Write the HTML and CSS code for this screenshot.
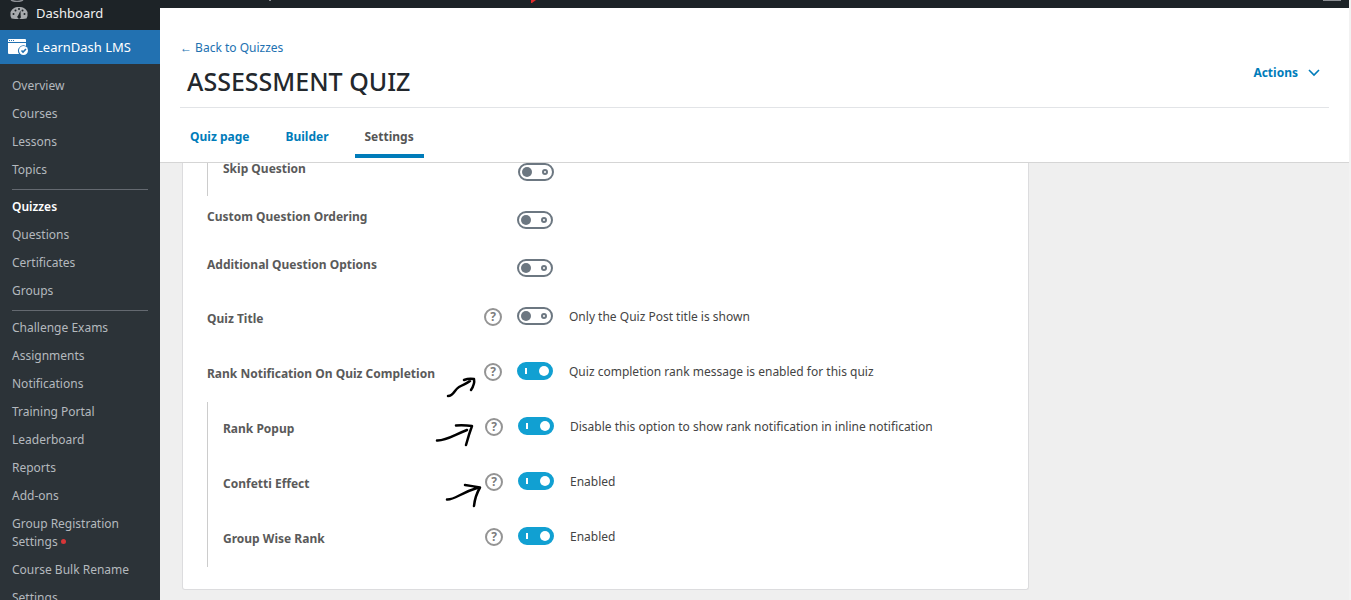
FILE: index.html
```html
<!DOCTYPE html>
<html lang="en">
<head>
    <meta charset="UTF-8">
    <meta name="viewport" content="width=device-width, initial-scale=1.0">
    <title>Assessment Quiz - Settings</title>
    <link rel="stylesheet" href="styles.css">
</head>
<body>
    <aside class="sidebar">
        <svg class="site-icon" width="14" height="2" viewBox="0 0 14 2"><path d="M1 0Q7 3 13 0" fill="none" stroke="#8c8f94" stroke-width="1.5"/></svg>
        <a class="menu-top" href="#">
            <svg width="18" height="14" viewBox="0 0 18 14">
                <path d="M1.500 12.500Q0 10 .5 6.500C1.500 3 4.500 1 9 1s7.500 2 8.500 5.500q.5 3.500-1 6-7.500 1-15 0z" fill="#a7aaad"/>
                <g fill="#1d2327"><circle cx="3.500" cy="8" r="1"/><circle cx="5.500" cy="4.500" r="1"/><circle cx="9" cy="3" r="1"/><circle cx="12.500" cy="4.500" r="1"/><circle cx="14.500" cy="8" r="1"/><path d="m10.500 4.500.2 5.500a1.800 1.800 0 1 1-2.600-.6z"/></g>
            </svg>
            Dashboard
        </a>
        <a class="menu-top current" href="#">
            <svg width="20" height="16" viewBox="0 0 20 16">
                <path d="M1 0h16a1 1 0 0 1 1 1v2H0V1a1 1 0 0 1 1-1zM0 4h18v3a5.500 5.500 0 0 0-7 8H1a1 1 0 0 1-1-1z" fill="#fff"/>
                <path d="M1 1.500h1M3 1.500h1M5 1.500h1" stroke="#2271b1"/>
                <circle cx="15.500" cy="11.500" r="4.500" fill="#fff"/>
                <path d="m13.500 11.500 1.500 1.500 3-3" fill="none" stroke="#2271b1" stroke-width="1.600"/>
            </svg>
            LearnDash LMS
        </a>
        <ul class="submenu">
            <li><a href="#">Overview</a></li>
            <li><a href="#">Courses</a></li>
            <li><a href="#">Lessons</a></li>
            <li><a href="#">Topics</a></li>
            <li class="separator"></li>
            <li><a class="active" href="#">Quizzes</a></li>
            <li><a href="#">Questions</a></li>
            <li><a href="#">Certificates</a></li>
            <li><a href="#">Groups</a></li>
            <li class="separator"></li>
            <li><a href="#">Challenge Exams</a></li>
            <li><a href="#">Assignments</a></li>
            <li><a href="#">Notifications</a></li>
            <li><a href="#">Training Portal</a></li>
            <li><a href="#">Leaderboard</a></li>
            <li><a href="#">Reports</a></li>
            <li><a href="#">Add-ons</a></li>
            <li><a href="#">Group Registration Settings <span class="dot"></span></a></li>
            <li><a href="#">Course Bulk Rename</a></li>
            <li><a href="#">Settings</a></li>
        </ul>
    </aside>

    <div class="page">
        <div class="admin-bar">
            <span class="bar-tick"></span>
            <svg class="bar-flag" width="5" height="3" viewBox="0 0 5 3"><path d="M0 0h5L1 3H0z" fill="#e02b2b"/></svg>
            <span class="bar-avatar"></span>
        </div>

        <header class="page-header">
            <a class="back" href="#">← Back to Quizzes</a>
            <div class="title-row">
                <h1>ASSESSMENT QUIZ</h1>
                <button class="actions" type="button">
                    Actions
                    <svg width="12" height="8" viewBox="0 0 12 8"><path d="m1 1 5 5 5-5" fill="none" stroke="currentColor" stroke-width="1.600"/></svg>
                </button>
            </div>
            <nav class="tabs">
                <a href="#">Quiz page</a>
                <a href="#">Builder</a>
                <a class="selected" href="#">Settings</a>
            </nav>
        </header>

        <main>
            <form class="card">
                <div class="sub-settings">
                    <div class="row short">
                        <label class="name" for="skip">Skip Question</label>
                        <input class="toggle" type="checkbox" id="skip">
                    </div>
                </div>
                <div class="row short">
                    <label class="name" for="ordering">Custom Question Ordering</label>
                    <input class="toggle" type="checkbox" id="ordering">
                </div>
                <div class="row short">
                    <label class="name" for="additional">Additional Question Options</label>
                    <input class="toggle" type="checkbox" id="additional">
                </div>
                <div class="row">
                    <label class="name" for="quiz-title">Quiz Title</label>
                    <button class="help" type="button">?</button>
                    <input class="toggle" type="checkbox" id="quiz-title">
                    <label class="desc" for="quiz-title">Only the Quiz Post title is shown</label>
                </div>
                <div class="row">
                    <label class="name" for="rank">Rank Notification On Quiz Completion</label>
                    <button class="help" type="button">?</button>
                    <input class="toggle" type="checkbox" id="rank" checked>
                    <label class="desc" for="rank">Quiz completion rank message is enabled for this quiz</label>
                </div>
                <div class="sub-settings">
                    <div class="row">
                        <label class="name" for="popup">Rank Popup</label>
                        <button class="help" type="button">?</button>
                        <input class="toggle" type="checkbox" id="popup" checked>
                        <label class="desc" for="popup">Disable this option to show rank notification in inline notification</label>
                    </div>
                    <div class="row">
                        <label class="name" for="confetti">Confetti Effect</label>
                        <button class="help" type="button">?</button>
                        <input class="toggle" type="checkbox" id="confetti" checked>
                        <label class="desc" for="confetti">Enabled</label>
                    </div>
                    <div class="row">
                        <label class="name" for="group-rank">Group Wise Rank</label>
                        <button class="help" type="button">?</button>
                        <input class="toggle" type="checkbox" id="group-rank" checked>
                        <label class="desc" for="group-rank">Enabled</label>
                    </div>
                </div>

                <!-- hand drawn arrows pointing at the help buttons -->
                <svg class="arrows" width="60" height="140" viewBox="430 370 60 140">
                    <path d="M448 396C454 396 454 390 459 387S466 384 470 381M464 380Q469 378 474 379 475 384 471 390"/>
                    <path d="M437 440.500C446 441 454 435 467 430M456 425.500Q464 425 472 426 469 434 466 445"/>
                    <path d="M447 499.500C455 500 460 493 477 488M465 485Q472 486 480 487.500 475 496 474 506"/>
                </svg>
            </form>
        </main>
    </div>
</body>
</html>
```
FILE: styles.css
```css
/* General Styles */
*,
*::before,
*::after {
    box-sizing: border-box;
}

body {
    margin: 0;
    padding-right: 2px;
    display: flex;
    height: 100vh;
    overflow: hidden;
    background-color: #f2f2f2;
    color: #3c434a;
    font-family: "Segoe UI", "Noto Sans", sans-serif;
    font-size: 12px;
    line-height: 18px;
}

a {
    color: #2271b1;
    text-decoration: none;
}

button {
    font-family: inherit;
    cursor: pointer;
}

/* Sidebar Styles */
.sidebar {
    flex: 0 0 160px;
    background-color: #1d2327;
    display: flex;
    flex-direction: column;
    overflow: hidden;
}

.site-icon {
    flex-shrink: 0;
    margin-left: 10px;
}

.menu-top {
    display: flex;
    align-items: center;
    flex-shrink: 0;
    gap: 8px;
    height: 28px;
    padding: 0 8px 6px 10px;
    font-size: 13px;
    color: #f0f0f1;
}

.menu-top.current {
    height: 34px;
    padding: 0 8px;
    background-color: #2271b1;
    color: #fff;
}

.submenu {
    flex: 1 0 auto;
    margin: 0;
    padding: 8px 0;
    list-style: none;
    background-color: #2c3338;
}

.submenu a {
    display: block;
    padding: 5px 12px;
    color: #b4b9be;
}

.submenu a.active {
    color: #fff;
    font-weight: 600;
}

.separator {
    height: 1px;
    margin: 5px 12px 3px;
    background-color: #646970;
}

.dot {
    display: inline-block;
    width: 5px;
    height: 5px;
    margin-bottom: 2px;
    border-radius: 50%;
    background-color: #d63638;
}

/* Header Styles */
.page {
    flex: 1;
    min-width: 0;
    display: flex;
    flex-direction: column;
    background-color: #efefef;
}

.admin-bar {
    display: flex;
    align-items: flex-start;
    height: 8px;
    flex-shrink: 0;
    padding: 0 8px 0 109px;
    background-color: #1d2327;
}

.bar-tick {
    width: 2px;
    height: 1px;
    background-color: #8c8f94;
}

.bar-flag {
    margin-left: 260px;
}

.bar-avatar {
    width: 18px;
    height: 1px;
    margin-left: auto;
    background-color: #8c8f94;
}

.page-header {
    position: relative;
    z-index: 1;
    flex-shrink: 0;
    padding: 31px 20px 4px;
    background-color: #fff;
    border-bottom: 1px solid #d5d5d5;
}

.back {
    display: block;
}

.title-row {
    display: flex;
    justify-content: space-between;
    align-items: flex-start;
    height: 51px;
    padding: 7px 9px 0 7px;
    border-bottom: 1px solid #e2e4e7;
}

h1 {
    margin: 0;
    font-size: 25px;
    font-weight: 500;
    line-height: 34px;
    color: #23282d;
}

.actions {
    display: flex;
    align-items: center;
    gap: 10px;
    padding: 0;
    border: 0;
    background: none;
    color: #007cba;
    font-size: 12px;
    font-weight: 700;
    line-height: 18px;
}

.tabs {
    display: flex;
    gap: 16px;
}

.tabs a {
    padding: 20px 10px 8px;
    border-bottom: 4px solid transparent;
    font-weight: 700;
    color: #007cba;
}

.tabs a.selected {
    border-bottom-color: #007cba;
    color: #555;
}

/* Settings Styles */
main {
    flex: 1;
    min-height: 0;
    padding: 0 320px 0 22px;
}

.card {
    position: relative;
    margin-top: -15px; /* scrolled under the header */
    padding: 0 24px 22px;
    border: 1px solid #dcdcde;
    border-top: 0;
    border-radius: 3px;
    background-color: #fff;
}

.row {
    display: flex;
    align-items: flex-start;
    min-height: 55px;
    padding-top: 15px;
}

.name {
    width: 277px;
    padding-top: 3px;
    font-weight: 700;
    color: #5a5a5a;
}

.sub-settings {
    padding-left: 15px;
    border-left: 1px solid #ccc;
}

.sub-settings .name {
    width: 262px;
}

.row.short {
    min-height: 48px;
}

.short .name {
    margin-top: -6px;
    margin-right: 33px;
}

.help {
    width: 18px;
    height: 18px;
    margin: 1px 15px 0 0;
    padding: 0;
    border: 2px solid #949494;
    border-radius: 50%;
    background: none;
    color: #7c7c7c;
    font-size: 12px;
    font-weight: 700;
    line-height: 14px;
}

.toggle {
    appearance: none;
    display: flex;
    align-items: center;
    justify-content: space-between;
    width: 36px;
    height: 18px;
    margin: 0 16px 0 0;
    padding: 0 2px;
    border: 2px solid #6c7781;
    border-radius: 9px;
    background-color: #fff;
}

.toggle::before {
    content: "";
    width: 10px;
    height: 10px;
    border-radius: 50%;
    background-color: #6c7781;
}

.toggle::after {
    content: "";
    width: 6px;
    height: 6px;
    margin-right: 2px;
    border: 2px solid #6c7781;
    border-radius: 50%;
}

.toggle:checked {
    border-color: #11a0d2;
    background-color: #11a0d2;
}

.toggle:checked::before {
    width: 2px;
    height: 6px;
    margin-left: 4px;
    border-radius: 0;
    background-color: #fff;
}

.toggle:checked::after {
    width: 10px;
    height: 10px;
    margin-right: 0;
    border: 0;
    background-color: #fff;
}

.desc {
    padding-top: 1px;
    color: #444;
}

.arrows {
    position: absolute;
    top: 222px;
    left: 247px;
    fill: none;
    stroke: #000;
    stroke-width: 2.500;
    stroke-linecap: round;
    stroke-linejoin: round;
    pointer-events: none;
}
```
